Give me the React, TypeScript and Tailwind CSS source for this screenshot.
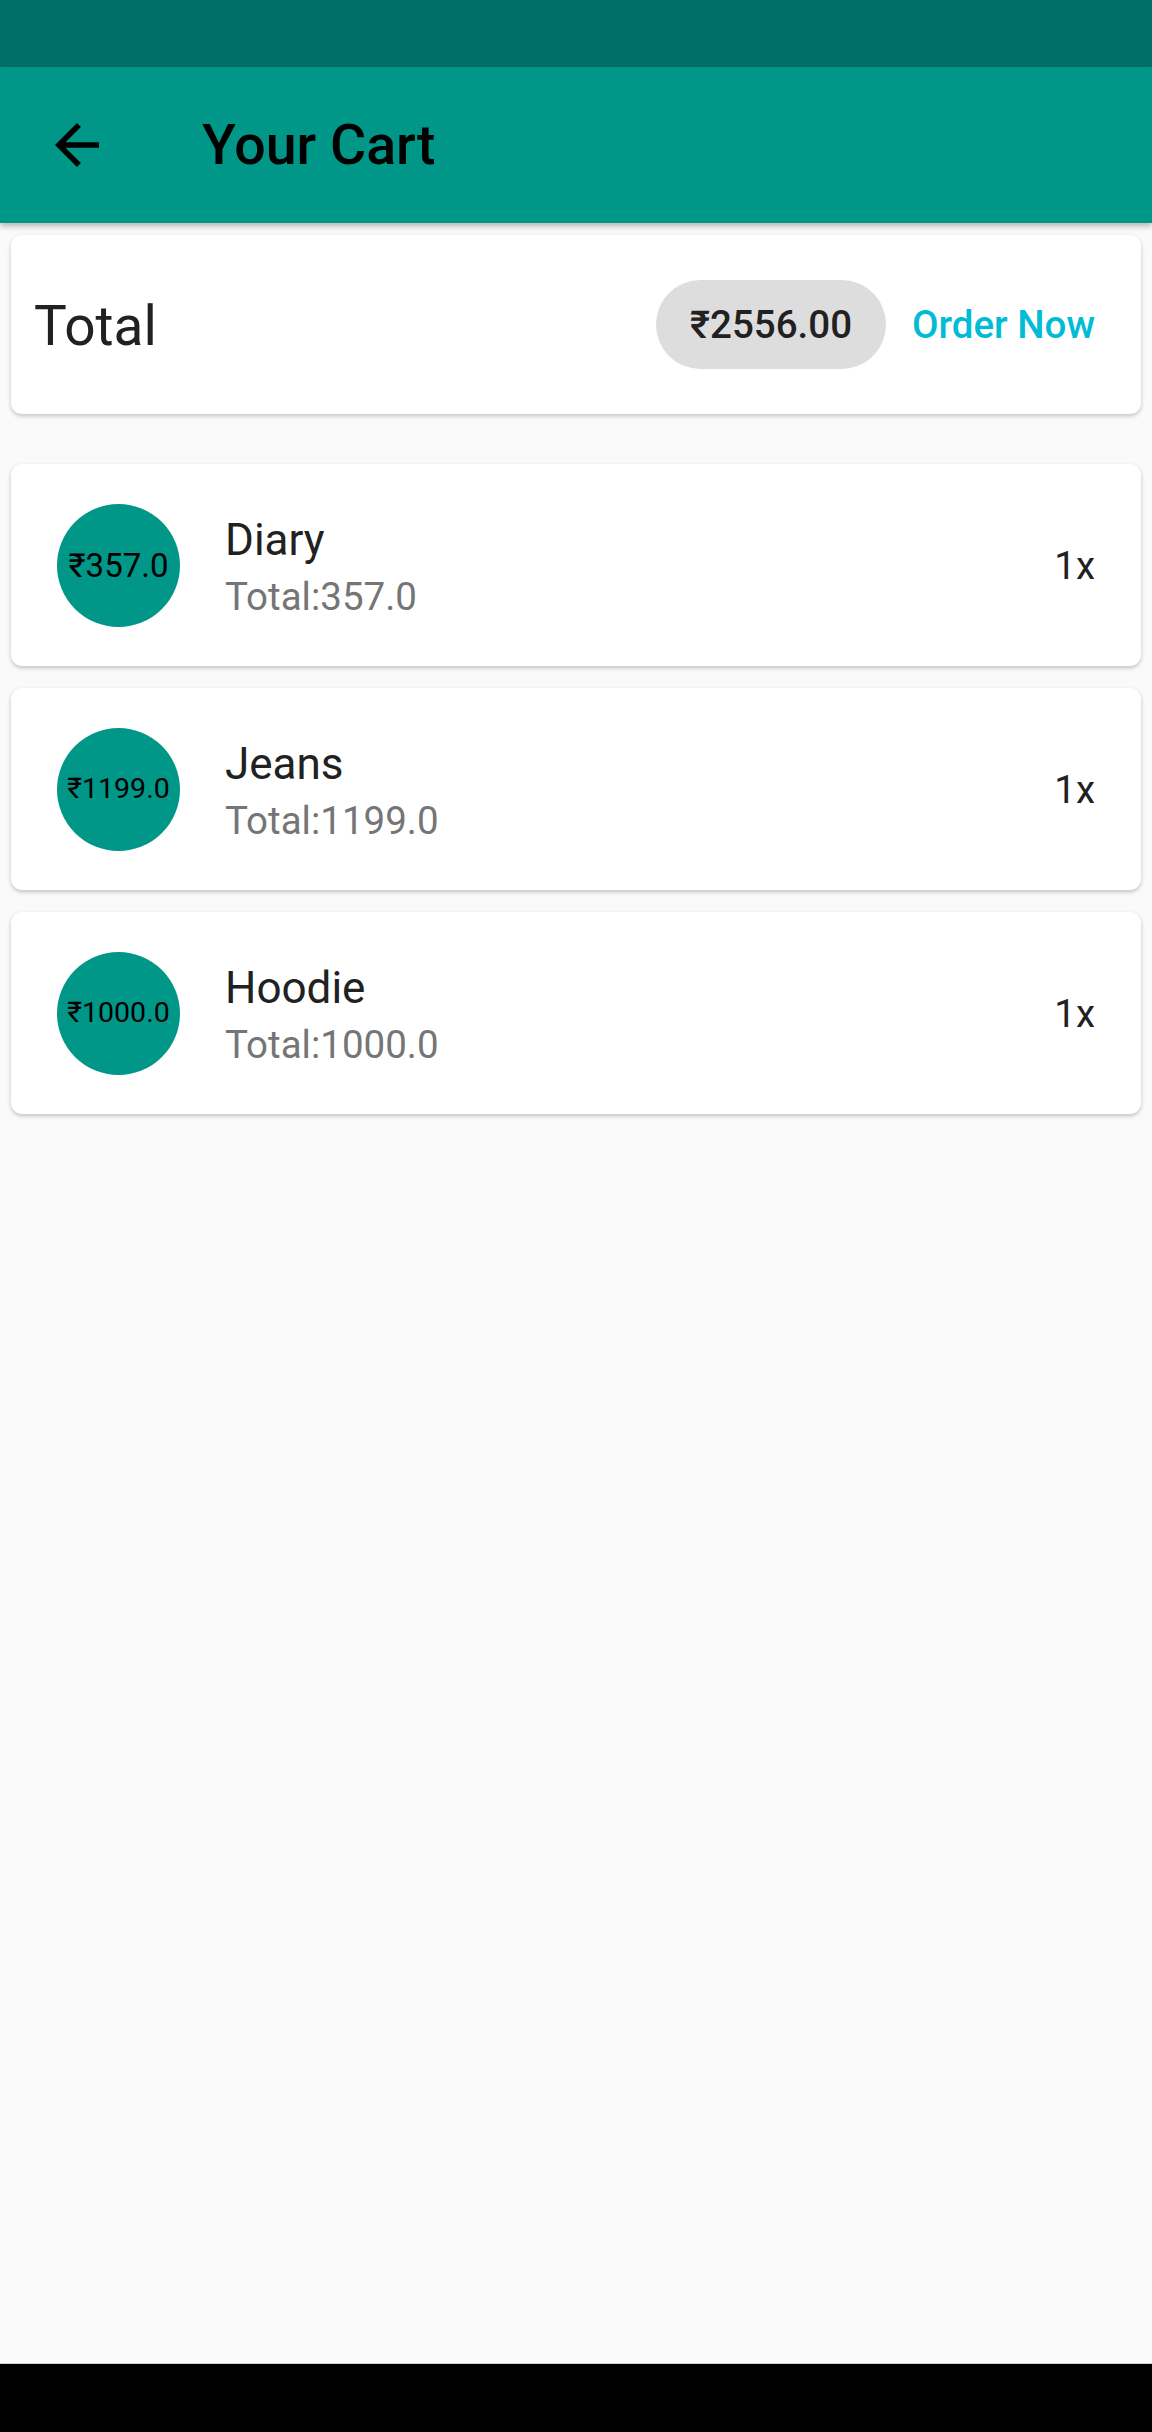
import React from "react";

const items = [
  { name: "Diary", price: "₹357.0", total: "Total:357.0", fs: "text-[33px]" },
  { name: "Jeans", price: "₹1199.0", total: "Total:1199.0", fs: "text-[28.5px]" },
  { name: "Hoodie", price: "₹1000.0", total: "Total:1000.0", fs: "text-[28.5px]" },
];

export default function App() {
  return (
    <div
      className="flex h-[2432px] w-[1152px] flex-col bg-[#fafafa]"
      style={{ fontFamily: "Roboto, 'Noto Sans', sans-serif" }}
    >
      <div className="h-[67px] shrink-0 bg-[#007066]" />
      <div className="relative z-10 flex h-[156px] shrink-0 items-center bg-[#009688] shadow-[0_3px_6px_rgba(0,0,0,0.28)]">
        <div className="ml-[44px] flex h-[66px] w-[66px] items-center justify-center">
          <svg width="66" height="66" viewBox="0 0 24 24" fill="#000">
            <path d="M20 11H7.83l5.59-5.59L12 4l-8 8 8 8 1.41-1.41L7.83 13H20v-2z" />
          </svg>
        </div>
        <div className="ml-[92px] pt-[2px] text-[55.5px] font-medium leading-[64px] text-black">Your Cart</div>
      </div>

      <div className="flex flex-1 flex-col">
        <div className="mx-[11px] mt-[12px] flex h-[179px] items-center rounded-[11px] bg-white pl-[23px] pr-[46px] shadow-[0_2px_4px_rgba(0,0,0,0.22)]">
          <div className="flex-1 pt-[2px] text-[55px] leading-[64px] text-[#212121]">Total</div>
          <div className="flex h-[89px] w-[230px] items-center justify-center rounded-full bg-[#dddddd] text-[38.5px] font-medium leading-[46px] text-[#212121]">
            ₹2556.00
          </div>
          <div className="ml-[26px] text-[38.5px] font-medium leading-[46px] text-[#00bcd4]">Order Now</div>
        </div>

        <div className="mt-[50px] flex flex-col gap-[22px]">
          {items.map((it) => (
            <div
              key={it.name}
              className="mx-[11px] flex h-[202px] items-center rounded-[11px] bg-white pl-[46px] pr-[46px] shadow-[0_2px_4px_rgba(0,0,0,0.22)]"
            >
              <div
                className={`flex h-[123px] w-[123px] shrink-0 items-center justify-center rounded-full bg-[#009688] ${it.fs} leading-none text-black`}
              >
                {it.price}
              </div>
              <div className="ml-[45px] flex flex-1 flex-col pt-[4px]">
                <div className="text-[44px] leading-[52px] text-[#212121]">{it.name}</div>
                <div className="mt-[8px] text-[38.5px] leading-[46px] text-[#757575]">{it.total}</div>
              </div>
              <div className="pt-[2px] text-[38.5px] leading-[46px] text-[#212121]">1x</div>
            </div>
          ))}
        </div>
      </div>

      <div className="h-[69px] shrink-0 border-t border-[#d4d4d4] bg-black" />
    </div>
  );
}
